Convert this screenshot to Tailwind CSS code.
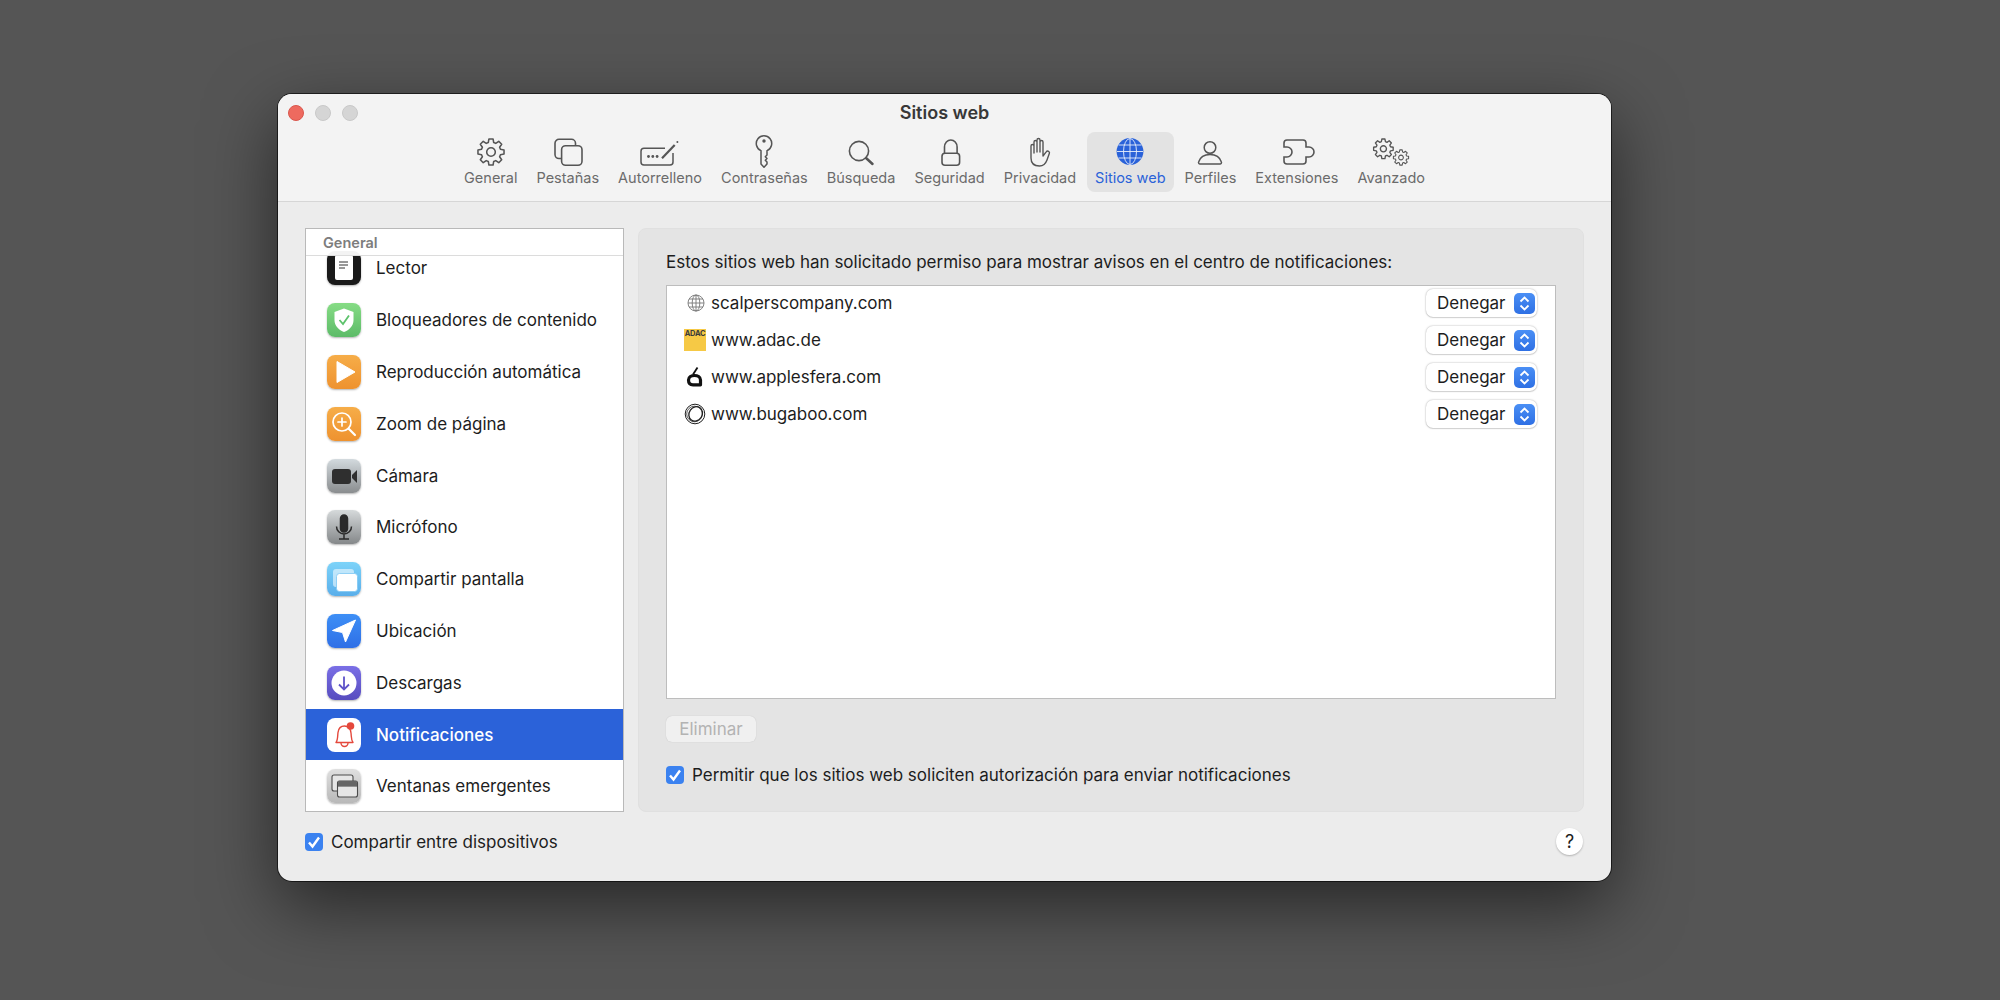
<!DOCTYPE html>
<html lang="es">
<head>
    <meta charset="UTF-8">
    <title>Sitios web</title>
    <script src="https://cdn.jsdelivr.net/npm/@tailwindcss/browser@4"></script>
</head>
<body class="bg-[#555555] h-screen overflow-hidden font-[family-name:Inter,'Liberation_Sans',sans-serif] text-[#1d1d1d]">

<div class="ml-[278px] pt-[94px]">
<div class="w-[1333px] h-[787px] rounded-[14px] bg-[#ececec] overflow-hidden ring-1 ring-black/60 shadow-[0_24px_70px_rgba(0,0,0,0.55)]">

    <!-- title bar + toolbar -->
    <div class="bg-[#f3f3f3] border-b border-[#d6d6d6] pt-[8px] pb-[9px]">
        <div class="relative h-[22px] flex items-center justify-center text-[18px] font-semibold leading-[22px] text-[#383838]">
            <div class="absolute left-[10px] top-[3px] flex gap-[11px]">
                <div class="w-[16px] h-[16px] rounded-full bg-[#ee6a5f] border border-[#d9574d]"></div>
                <div class="w-[16px] h-[16px] rounded-full bg-[#d5d5d5] border border-[#c8c8c8]"></div>
                <div class="w-[16px] h-[16px] rounded-full bg-[#d5d5d5] border border-[#c8c8c8]"></div>
            </div>
            Sitios web
        </div>
        <div class="mt-[8px] flex justify-center gap-[3px] text-[14.5px] leading-[18px] text-[#6b6b6b]">
            <div class="h-[60px] px-[8px] pt-[4px] flex flex-col items-center">
                <svg class="w-[40px] h-[32px] overflow-visible" viewBox="0 0 40 32" fill="none" stroke="#555" stroke-width="1.3" stroke-linejoin="round">
                    <g transform="translate(20 16) scale(1.2)"><polygon points="2.26,-7.88 1.72,-10.86 -1.72,-10.86 -2.26,-7.88 -3.97,-7.17 -6.46,-8.9 -8.9,-6.46 -7.17,-3.97 -7.88,-2.26 -10.86,-1.72 -10.86,1.72 -7.88,2.26 -7.17,3.97 -8.9,6.46 -6.46,8.9 -3.97,7.17 -2.26,7.88 -1.72,10.86 1.72,10.86 2.26,7.88 3.97,7.17 6.46,8.9 8.9,6.46 7.17,3.97 7.88,2.26 10.86,1.72 10.86,-1.72 7.88,-2.26 7.17,-3.97 8.9,-6.46 6.46,-8.9 3.97,-7.17"/><circle r="3.6"/></g>
                </svg>
                <span class="mt-[1px]">General</span>
            </div>
            <div class="h-[60px] px-[8px] pt-[4px] flex flex-col items-center">
                <svg class="w-[40px] h-[32px] overflow-visible" viewBox="0 0 40 32" fill="none" stroke="#555" stroke-width="1.6">
                    <path d="M13.6 22.5H11a4 4 0 0 1-4-4V7.3a4 4 0 0 1 4-4h12.5a4 4 0 0 1 4 4v2.4"/>
                    <rect x="13.6" y="9.7" width="20.4" height="19.6" rx="4"/>
                </svg>
                <span class="mt-[1px]">Pestañas</span>
            </div>
            <div class="h-[60px] px-[8px] pt-[4px] flex flex-col items-center">
                <svg class="w-[40px] h-[32px] overflow-visible" viewBox="0 0 40 32" fill="none" stroke="#555" stroke-width="1.5">
                    <path d="M25 12.3H4a3 3 0 0 0-3 3V26a3 3 0 0 0 3 3h26a3 3 0 0 0 3-3v-9"/>
                    <path d="M22 22.3 34.7 9" stroke-width="2.2"/>
                    <circle cx="37.4" cy="5.9" r="1" fill="#555" stroke="none"/>
                    <g fill="#555" stroke="none"><circle cx="8.5" cy="20.5" r="1.4"/><circle cx="12.8" cy="20.5" r="1.4"/><circle cx="17.1" cy="20.5" r="1.4"/></g>
                </svg>
                <span class="mt-[1px]">Autorrelleno</span>
            </div>
            <div class="h-[60px] px-[8px] pt-[4px] flex flex-col items-center">
                <svg class="w-[40px] h-[32px] overflow-visible" viewBox="0 0 40 32" fill="none" stroke="#555" stroke-width="1.5" stroke-linejoin="round">
                    <path d="M17 14.6A7.7 7.7 0 1 1 23 14.6V19L21.3 20.8 23 22.5 21.3 24.2 23 26V28L20 31.3 17 28Z"/>
                    <circle cx="20" cy="5" r="1.7" fill="#555" stroke="none"/>
                </svg>
                <span class="mt-[1px]">Contraseñas</span>
            </div>
            <div class="h-[60px] px-[8px] pt-[4px] flex flex-col items-center">
                <svg class="w-[40px] h-[32px] overflow-visible" viewBox="0 0 40 32" fill="none" stroke="#555" stroke-width="1.6" stroke-linecap="round">
                    <circle cx="18" cy="15" r="9.6"/>
                    <path d="M25 22 31.5 28" stroke-width="2.5"/>
                </svg>
                <span class="mt-[1px]">Búsqueda</span>
            </div>
            <div class="h-[60px] px-[8px] pt-[4px] flex flex-col items-center">
                <svg class="w-[40px] h-[32px] overflow-visible" viewBox="0 0 40 32" fill="none" stroke="#555" stroke-width="1.6">
                    <rect x="12" y="17.3" width="17.6" height="12" rx="3"/>
                    <path d="M14.5 17.3V11a6.3 7 0 0 1 12.6 0v6.3"/>
                </svg>
                <span class="mt-[1px]">Seguridad</span>
            </div>
            <div class="h-[60px] px-[8px] pt-[4px] flex flex-col items-center">
                <svg class="w-[40px] h-[32px] overflow-visible" viewBox="0 0 40 32" fill="none" stroke="#555" stroke-width="1.4" stroke-linejoin="round">
                    <path d="M11 22V10a1.5 1.5 0 0 1 3 0v7V6a1.5 1.5 0 0 1 3 0v10V4a1.5 1.5 0 0 1 3 0v12V6a1.5 1.5 0 0 1 3 0v14l3.2-4.2a1.8 1.8 0 0 1 3.1 1.8L27 24c-1.4 3.8-4 6-7.5 6-5.5 0-8.5-3-8.5-8Z"/>
                </svg>
                <span class="mt-[1px]">Privacidad</span>
            </div>
            <div class="h-[60px] px-[8px] pt-[4px] flex flex-col items-center rounded-[8px] bg-[#e3e3e3] text-[#2a62d9]">
                <svg class="w-[40px] h-[32px] overflow-visible" viewBox="0 0 40 32" fill="#2a62d9" stroke="#e8eefb" stroke-width="0.9">
                    <circle cx="20" cy="15.5" r="13.4" stroke="none"/>
                    <ellipse cx="20" cy="15.5" rx="6.5" ry="13"/>
                    <path d="M20 2.5V28.500M7 15.500H33M8.500 9H31.500M8.500 22H31.500" fill="none"/>
                </svg>
                <span class="mt-[1px]">Sitios web</span>
            </div>
            <div class="h-[60px] px-[8px] pt-[4px] flex flex-col items-center">
                <svg class="w-[40px] h-[32px] overflow-visible" viewBox="0 0 40 32" fill="none" stroke="#555" stroke-width="1.5">
                    <circle cx="20" cy="11.500" r="5.800"/>
                    <path d="M10 28H30a1.500 1.500 0 0 0 1.400-2C29.800 21 25 18.500 20 18.500S10.200 21 8.600 26A1.500 1.500 0 0 0 10 28Z"/>
                </svg>
                <span class="mt-[1px]">Perfiles</span>
            </div>
            <div class="h-[60px] px-[8px] pt-[4px] flex flex-col items-center">
                <svg class="w-[40px] h-[32px] overflow-visible" viewBox="0 0 40 32" fill="none" stroke="#555" stroke-width="1.6">
                    <path d="M10 4H26a3 3 0 0 1 3 3v4h3a5 5 0 0 1 0 10H29v4a3 3 0 0 1-3 3H10a3 3 0 0 1-3-3V21h3a5 5 0 0 0 0-10H7V7a3 3 0 0 1 3-3Z"/>
                </svg>
                <span class="mt-[1px]">Extensiones</span>
            </div>
            <div class="h-[60px] px-[8px] pt-[4px] flex flex-col items-center">
                <svg class="w-[40px] h-[32px] overflow-visible" viewBox="0 0 40 32" fill="none" stroke="#555" stroke-width="1.5" stroke-linejoin="round">
                    <g transform="translate(12.400 12.800) scale(0.9)"><polygon points="2.26,-7.88 1.72,-10.86 -1.72,-10.86 -2.26,-7.88 -3.97,-7.17 -6.46,-8.9 -8.9,-6.46 -7.17,-3.97 -7.88,-2.26 -10.86,-1.72 -10.86,1.72 -7.88,2.26 -7.17,3.97 -8.9,6.46 -6.46,8.9 -3.97,7.17 -2.26,7.88 -1.72,10.86 1.72,10.86 2.26,7.88 3.97,7.17 6.46,8.9 8.9,6.46 7.17,3.97 7.88,2.26 10.86,1.72 10.86,-1.72 7.88,-2.26 7.17,-3.97 8.9,-6.46 6.46,-8.9 3.97,-7.17"/><circle r="3.4"/></g>
                    <g transform="translate(30 21.500) scale(0.7)"><polygon points="2.26,-7.88 1.72,-10.86 -1.72,-10.86 -2.26,-7.88 -3.97,-7.17 -6.46,-8.9 -8.9,-6.46 -7.17,-3.97 -7.88,-2.26 -10.86,-1.72 -10.86,1.72 -7.88,2.26 -7.17,3.97 -8.9,6.46 -6.46,8.9 -3.97,7.17 -2.26,7.88 -1.72,10.86 1.72,10.86 2.26,7.88 3.97,7.17 6.46,8.9 8.9,6.46 7.17,3.97 7.88,2.26 10.86,1.72 10.86,-1.72 7.88,-2.26 7.17,-3.97 8.9,-6.46 6.46,-8.9 3.97,-7.17"/><circle r="3.4"/></g>
                </svg>
                <span class="mt-[1px]">Avanzado</span>
            </div>
        </div>
    </div>

    <!-- content -->
    <div class="pl-[27px] pr-[27px] pt-[26px]">
        <div class="flex gap-[14px] h-[584px]">

            <!-- left list -->
            <div class="w-[319px] h-[584px] border border-[#b9b9b9] bg-white overflow-hidden">
                <div class="relative z-10 h-[27px] bg-white/95 border-b border-[#dcdcdc] pl-[17px] text-[14.500px] leading-[27px] font-semibold text-[#7d7d7d]">General</div>
                <div class="-mt-[13.500px] text-[17px] leading-[22px]">
                    <div class="h-[51.800px] flex items-center gap-[15px] pl-[21px]">
                        <div class="w-[34px] h-[34px] shrink-0 rounded-[8px] bg-[#1a1a1a] shadow-[0_1px_2px_rgba(0,0,0,0.3)]">
                            <svg class="w-[34px] h-[34px]" viewBox="0 0 34 34"><rect x="8" y="4" width="18" height="25" rx="2" fill="#fff"/><path d="M12 11h9M12 14h9M12 17h6" stroke="#333" stroke-width="1"/></svg>
                        </div>
                        <span>Lector</span>
                    </div>
                    <div class="h-[51.800px] flex items-center gap-[15px] pl-[21px]">
                        <div class="w-[34px] h-[34px] shrink-0 rounded-[8px] bg-linear-to-b from-[#86dc85] to-[#5cbb68] shadow-[0_1px_2px_rgba(0,0,0,0.3)]">
                            <svg class="w-[34px] h-[34px]" viewBox="0 0 34 34"><path d="M17 5.500 26.500 9V17C26.500 23 22 27 17 29 12 27 7.500 23 7.500 17V9Z" fill="#fff"/><path d="M12.500 17 16 21 22 12.500" fill="none" stroke="#5cc26b" stroke-width="1.800"/></svg>
                        </div>
                        <span>Bloqueadores de contenido</span>
                    </div>
                    <div class="h-[51.800px] flex items-center gap-[15px] pl-[21px]">
                        <div class="w-[34px] h-[34px] shrink-0 rounded-[8px] bg-linear-to-b from-[#f6ad48] to-[#ee922f] shadow-[0_1px_2px_rgba(0,0,0,0.3)]">
                            <svg class="w-[34px] h-[34px]" viewBox="0 0 34 34"><path d="M10 6.500 28 17 10 27.500Z" fill="#fff" stroke="#fff" stroke-width="1" stroke-linejoin="round"/></svg>
                        </div>
                        <span>Reproducción automática</span>
                    </div>
                    <div class="h-[51.800px] flex items-center gap-[15px] pl-[21px]">
                        <div class="w-[34px] h-[34px] shrink-0 rounded-[8px] bg-linear-to-b from-[#f6ad48] to-[#ee922f] shadow-[0_1px_2px_rgba(0,0,0,0.3)]">
                            <svg class="w-[34px] h-[34px]" viewBox="0 0 34 34" fill="none" stroke="#fff" stroke-width="1.700" stroke-linecap="round"><circle cx="15" cy="15" r="9"/><path d="M21.500 21.500 28 28" stroke-width="2.200"/><path d="M15 11v8M11 15h8"/></svg>
                        </div>
                        <span>Zoom de página</span>
                    </div>
                    <div class="h-[51.800px] flex items-center gap-[15px] pl-[21px]">
                        <div class="w-[34px] h-[34px] shrink-0 rounded-[8px] bg-linear-to-b from-[#d3dade] to-[#8a8d8f] shadow-[0_1px_2px_rgba(0,0,0,0.3)]">
                            <svg class="w-[34px] h-[34px]" viewBox="0 0 34 34" fill="#2f2f2f"><rect x="5" y="10" width="19" height="15" rx="3"/><path d="M25 16 30 11V24L25 19Z"/></svg>
                        </div>
                        <span>Cámara</span>
                    </div>
                    <div class="h-[51.800px] flex items-center gap-[15px] pl-[21px]">
                        <div class="w-[34px] h-[34px] shrink-0 rounded-[8px] bg-linear-to-b from-[#d6dadb] to-[#85888a] shadow-[0_1px_2px_rgba(0,0,0,0.3)]">
                            <svg class="w-[34px] h-[34px]" viewBox="0 0 34 34" fill="none" stroke="#2a2a2a" stroke-width="1.500"><rect x="13.500" y="5" width="7" height="17" rx="3.500" fill="#2a2a2a"/><path d="M9.500 16.500a7.500 7.500 0 0 0 15 0M17 24v5M12 29h10"/></svg>
                        </div>
                        <span>Micrófono</span>
                    </div>
                    <div class="h-[51.800px] flex items-center gap-[15px] pl-[21px]">
                        <div class="w-[34px] h-[34px] shrink-0 rounded-[8px] bg-linear-to-b from-[#7dd3f9] to-[#59aeea] shadow-[0_1px_2px_rgba(0,0,0,0.3)]">
                            <svg class="w-[34px] h-[34px]" viewBox="0 0 34 34"><rect x="6" y="7" width="21" height="18" rx="3" fill="#fff" fill-opacity="0.55"/><rect x="9.500" y="11.500" width="21" height="18" rx="3" fill="#fff" stroke="#7cc6f3" stroke-width="0.800"/></svg>
                        </div>
                        <span>Compartir pantalla</span>
                    </div>
                    <div class="h-[51.800px] flex items-center gap-[15px] pl-[21px]">
                        <div class="w-[34px] h-[34px] shrink-0 rounded-[8px] bg-linear-to-b from-[#3e8ff6] to-[#2f6fe6] shadow-[0_1px_2px_rgba(0,0,0,0.3)]">
                            <svg class="w-[34px] h-[34px]" viewBox="0 0 34 34"><path d="M28.500 6 5.500 16.500 15.500 18.500 18.500 28Z" fill="#fff" stroke="#fff" stroke-linejoin="round"/></svg>
                        </div>
                        <span>Ubicación</span>
                    </div>
                    <div class="h-[51.800px] flex items-center gap-[15px] pl-[21px]">
                        <div class="w-[34px] h-[34px] shrink-0 rounded-[8px] bg-linear-to-b from-[#7a6fe6] to-[#574cbf] shadow-[0_1px_2px_rgba(0,0,0,0.3)]">
                            <svg class="w-[34px] h-[34px]" viewBox="0 0 34 34"><circle cx="17" cy="17" r="12.500" fill="#fff"/><path d="M17 10.500V23M12 18.500 17 23.500 22 18.500" fill="none" stroke="#5e53c9" stroke-width="1.800"/></svg>
                        </div>
                        <span>Descargas</span>
                    </div>
                    <div class="h-[51.800px] flex items-center gap-[15px] pl-[21px] bg-[#2b62d9] text-white font-medium">
                        <div class="w-[34px] h-[34px] shrink-0 rounded-[8px] bg-white">
                            <svg class="w-[34px] h-[34px]" viewBox="0 0 34 34" fill="none" stroke="#e4483c" stroke-width="1.400" stroke-linejoin="round"><path d="M9 24.500C11 22 10.500 18 11 14.500 11.500 10.500 14 8 17.500 8 21.500 8 23.500 11 24 15 24.500 19 24 22 26 24.500Z"/><path d="M14 25a3.500 3.500 0 0 0 7 0"/><circle cx="23.500" cy="8" r="3.800" fill="#e4483c" stroke="none"/></svg>
                        </div>
                        <span>Notificaciones</span>
                    </div>
                    <div class="h-[51.800px] flex items-center gap-[15px] pl-[21px]">
                        <div class="w-[34px] h-[34px] shrink-0 rounded-[8px] bg-linear-to-b from-[#e0e0e0] to-[#b8b8b8] shadow-[0_1px_2px_rgba(0,0,0,0.3)]">
                            <svg class="w-[34px] h-[34px]" viewBox="0 0 34 34" fill="#e6e6e6" stroke="#4c4c4c" stroke-width="1.100"><rect x="5" y="6" width="21" height="16" rx="2"/><rect x="10.500" y="12" width="20" height="16" rx="2"/><path d="M10.500 17H30.500" fill="none"/><path d="M11 13.500a1.500 1.500 0 0 1 1.500-1.500h16a1.500 1.500 0 0 1 1.500 1.500V17H11Z" fill="#666" stroke="none"/></svg>
                        </div>
                        <span>Ventanas emergentes</span>
                    </div>
                </div>
            </div>

            <!-- right panel -->
            <div class="w-[946px] h-[584px] rounded-[8px] bg-[#e4e4e4] border border-[#e0e0e0] pl-[27px] pr-[27px] pt-[22px] text-[17px] leading-[22px]">
                <p>Estos sitios web han solicitado permiso para mostrar avisos en el centro de notificaciones:</p>
                <div class="mt-[12px] h-[414px] border border-[#bdbdbd] bg-white">
                    <div class="h-[37px] pb-[3px] flex items-center pl-[17px] pr-[18px]">
                        <svg class="w-[22px] h-[22px] shrink-0" viewBox="0 0 22 22" fill="none" stroke="#777" stroke-width="0.900"><circle cx="12" cy="11" r="8"/><ellipse cx="12" cy="11" rx="3.800" ry="8"/><path d="M12 3V19M4 11H20M5 7H19M5 15H19"/></svg>
                        <span class="ml-[5px]">scalperscompany.com</span>
                        <div class="ml-auto w-[111px] h-[28px] rounded-[7px] bg-white shadow-[0_0_2px_rgba(0,0,0,0.35),0_1px_1px_rgba(0,0,0,0.1)] flex items-center pl-[11px] pr-[2px] justify-between">
                            <span>Denegar</span>
                            <div class="w-[21px] h-[21px] rounded-[5px] bg-linear-to-b from-[#4a8ff5] to-[#2f70e4]"><svg class="w-[21px] h-[21px]" viewBox="0 0 21 21" fill="none" stroke="#fff" stroke-width="1.800"><path d="M6.500 8.500 10.500 4.500 14.500 8.500M6.500 12.500 10.500 16.500 14.500 12.500"/></svg></div>
                        </div>
                    </div>
                    <div class="h-[37px] pb-[3px] flex items-center pl-[17px] pr-[18px]">
                        <div class="w-[22px] h-[22px] shrink-0 bg-[#f6c945] text-[7.500px] leading-[9px] font-bold text-[#3a3a3a] text-center tracking-[-0.2px]">ADAC</div>
                        <span class="ml-[5px]">www.adac.de</span>
                        <div class="ml-auto w-[111px] h-[28px] rounded-[7px] bg-white shadow-[0_0_2px_rgba(0,0,0,0.35),0_1px_1px_rgba(0,0,0,0.1)] flex items-center pl-[11px] pr-[2px] justify-between">
                            <span>Denegar</span>
                            <div class="w-[21px] h-[21px] rounded-[5px] bg-linear-to-b from-[#4a8ff5] to-[#2f70e4]"><svg class="w-[21px] h-[21px]" viewBox="0 0 21 21" fill="none" stroke="#fff" stroke-width="1.800"><path d="M6.500 8.500 10.500 4.500 14.500 8.500M6.500 12.500 10.500 16.500 14.500 12.500"/></svg></div>
                        </div>
                    </div>
                    <div class="h-[37px] pb-[3px] flex items-center pl-[17px] pr-[18px]">
                        <svg class="w-[22px] h-[22px] shrink-0" viewBox="0 0 22 22" fill="none" stroke="#111" stroke-width="3.200"><path d="M4.500 14C4.500 11 7.500 9.500 10.500 9.500S16.500 11 16.500 14V18.800H9C6 18.800 4.500 17 4.500 14Z" stroke-linejoin="round"/><path d="M9 8.500 13.500 1.500" stroke-width="1.800"/></svg>
                        <span class="ml-[5px]">www.applesfera.com</span>
                        <div class="ml-auto w-[111px] h-[28px] rounded-[7px] bg-white shadow-[0_0_2px_rgba(0,0,0,0.35),0_1px_1px_rgba(0,0,0,0.1)] flex items-center pl-[11px] pr-[2px] justify-between">
                            <span>Denegar</span>
                            <div class="w-[21px] h-[21px] rounded-[5px] bg-linear-to-b from-[#4a8ff5] to-[#2f70e4]"><svg class="w-[21px] h-[21px]" viewBox="0 0 21 21" fill="none" stroke="#fff" stroke-width="1.800"><path d="M6.500 8.500 10.500 4.500 14.500 8.500M6.500 12.500 10.500 16.500 14.500 12.500"/></svg></div>
                        </div>
                    </div>
                    <div class="h-[37px] pb-[3px] flex items-center pl-[17px] pr-[18px]">
                        <svg class="w-[22px] h-[22px] shrink-0" viewBox="0 0 22 22" fill="none" stroke="#222" stroke-width="1"><circle cx="11" cy="11" r="9.800"/><ellipse cx="11.500" cy="10.500" rx="6.500" ry="7.500" transform="rotate(35 11 11)" stroke-width="1.300"/><circle cx="10.500" cy="11" r="7.800" stroke-width="0.700"/></svg>
                        <span class="ml-[5px]">www.bugaboo.com</span>
                        <div class="ml-auto w-[111px] h-[28px] rounded-[7px] bg-white shadow-[0_0_2px_rgba(0,0,0,0.35),0_1px_1px_rgba(0,0,0,0.1)] flex items-center pl-[11px] pr-[2px] justify-between">
                            <span>Denegar</span>
                            <div class="w-[21px] h-[21px] rounded-[5px] bg-linear-to-b from-[#4a8ff5] to-[#2f70e4]"><svg class="w-[21px] h-[21px]" viewBox="0 0 21 21" fill="none" stroke="#fff" stroke-width="1.800"><path d="M6.500 8.500 10.500 4.500 14.500 8.500M6.500 12.500 10.500 16.500 14.500 12.500"/></svg></div>
                        </div>
                    </div>
                </div>
                <div class="mt-[17px] w-[90px] h-[26px] rounded-[6px] bg-[#f0f0f0] shadow-[0_0_1px_rgba(0,0,0,0.2)] flex items-center justify-center text-[17px] text-[#b3b3b3]">Eliminar</div>
                <div class="mt-[22px] flex items-center gap-[8px]">
                    <div class="w-[18px] h-[18px] rounded-[4px] bg-[#3b82f0]"><svg class="w-[18px] h-[18px]" viewBox="0 0 18 18" fill="none" stroke="#fff" stroke-width="2.400"><path d="M4 9.500 7.500 13.500 14 4.500"/></svg></div>
                    <span>Permitir que los sitios web soliciten autorización para enviar notificaciones</span>
                </div>
            </div>
        </div>

        <!-- footer -->
        <div class="mt-[16px] flex items-center text-[17px] leading-[22px]">
            <div class="w-[18px] h-[18px] rounded-[4px] bg-[#3b82f0]"><svg class="w-[18px] h-[18px]" viewBox="0 0 18 18" fill="none" stroke="#fff" stroke-width="2.400"><path d="M4 9.500 7.500 13.500 14 4.500"/></svg></div>
            <span class="ml-[8px]">Compartir entre dispositivos</span>
            <div class="ml-auto mr-[1px] w-[27px] h-[27px] rounded-full bg-white shadow-[0_1px_2px_rgba(0,0,0,0.25)] flex items-center justify-center text-[18px]">?</div>
        </div>
    </div>
</div>
</div>

</body>
</html>
